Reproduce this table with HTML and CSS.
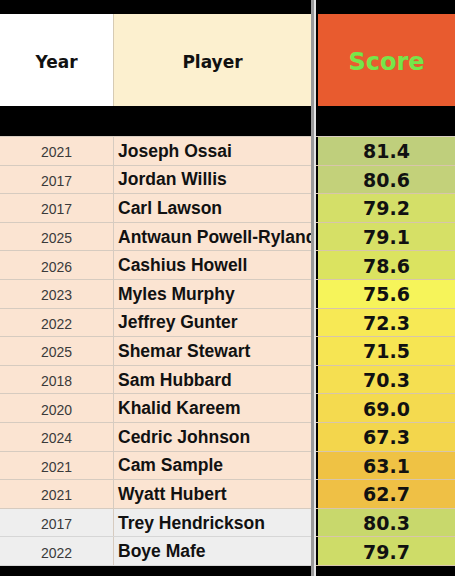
FILE: index.html
```html
<!DOCTYPE html>
<html lang="en">
<head>
    <meta charset="UTF-8">
    <meta name="viewport" content="width=device-width, initial-scale=1.0">
    <title>Edge Rusher Scores</title>
    <link rel="stylesheet" href="styles.css">
</head>
<body>
    <div class="sheet">
        <div class="panel left">
            <div class="bar top"></div>
            <div class="row head">
                <div class="cell year-head">Year</div>
                <div class="cell player-head">Player</div>
            </div>
            <div class="bar mid"></div>

            <div class="row"><div class="cell year">2021</div><div class="cell name">Joseph Ossai</div></div>
            <div class="row"><div class="cell year">2017</div><div class="cell name">Jordan Willis</div></div>
            <div class="row"><div class="cell year">2017</div><div class="cell name">Carl Lawson</div></div>
            <div class="row"><div class="cell year">2025</div><div class="cell name">Antwaun Powell-Rylander</div></div>
            <div class="row"><div class="cell year">2026</div><div class="cell name">Cashius Howell</div></div>
            <div class="row"><div class="cell year">2023</div><div class="cell name">Myles Murphy</div></div>
            <div class="row"><div class="cell year">2022</div><div class="cell name">Jeffrey Gunter</div></div>
            <div class="row"><div class="cell year">2025</div><div class="cell name">Shemar Stewart</div></div>
            <div class="row"><div class="cell year">2018</div><div class="cell name">Sam Hubbard</div></div>
            <div class="row"><div class="cell year">2020</div><div class="cell name">Khalid Kareem</div></div>
            <div class="row"><div class="cell year">2024</div><div class="cell name">Cedric Johnson</div></div>
            <div class="row"><div class="cell year">2021</div><div class="cell name">Cam Sample</div></div>
            <div class="row"><div class="cell year">2021</div><div class="cell name">Wyatt Hubert</div></div>
            <div class="row other"><div class="cell year">2017</div><div class="cell name">Trey Hendrickson</div></div>
            <div class="row other"><div class="cell year">2022</div><div class="cell name">Boye Mafe</div></div>

            <div class="bar bottom"></div>
        </div>

        <div class="divider"></div>

        <div class="panel right">
            <div class="bar top"></div>
            <div class="row head">
                <div class="cell score-head">Score</div>
            </div>
            <div class="bar mid"></div>

            <div class="row"><div class="cell score s1">81.4</div></div>
            <div class="row"><div class="cell score s2">80.6</div></div>
            <div class="row"><div class="cell score s3">79.2</div></div>
            <div class="row"><div class="cell score s4">79.1</div></div>
            <div class="row"><div class="cell score s5">78.6</div></div>
            <div class="row"><div class="cell score s6">75.6</div></div>
            <div class="row"><div class="cell score s7">72.3</div></div>
            <div class="row"><div class="cell score s8">71.5</div></div>
            <div class="row"><div class="cell score s9">70.3</div></div>
            <div class="row"><div class="cell score s10">69.0</div></div>
            <div class="row"><div class="cell score s11">67.3</div></div>
            <div class="row"><div class="cell score s12">63.1</div></div>
            <div class="row"><div class="cell score s13">62.7</div></div>
            <div class="row"><div class="cell score s14">80.3</div></div>
            <div class="row"><div class="cell score s15">79.7</div></div>

            <div class="bar bottom"></div>
        </div>
    </div>
</body>
</html>
```

FILE: styles.css
```css
* {
    margin: 0;
    padding: 0;
    box-sizing: border-box;
}

body {
    background: #000;
    width: 455px;
    height: 576px;
    overflow: hidden;
}

.sheet {
    display: flex;
    height: 576px;
}

.panel {
    display: flex;
    flex-direction: column;
}

.left {
    width: 311px;
}

.right {
    flex: 1;
    border-left: 2px solid #e4e4e4;
}

.divider {
    width: 3px;
    background: #9a9a9a;
}

.bar {
    background: #000;
}

.bar.top {
    height: 14px;
}

.bar.mid {
    height: 31px;
    border-bottom: 1px solid #d8cdc2;
}

.bar.bottom {
    flex: 1;
}

.row {
    display: flex;
    height: 28.6px;
    border-bottom: 1px solid #d6cbc0;
    background: #fbe4d2;
}

.row.other {
    background: #eeeeee;
    border-bottom-color: #d6d6d6;
}

.row.head {
    height: 92px;
    border-bottom: none;
}

.cell {
    display: flex;
    align-items: center;
}

.year-head,
.player-head,
.score-head {
    justify-content: center;
    font-family: "DejaVu Sans", Verdana, sans-serif;
    font-weight: bold;
    font-size: 17px;
    color: #111;
}

.year-head {
    width: 113px;
    background: #fff;
    padding-top: 3px;
}

.player-head {
    flex: 1;
    background: #fcf0cf;
    border-left: 1px solid #d6cbb4;
    padding-top: 3px;
}

.score-head {
    flex: 1;
    background: #e85b2f;
    color: #76e64a;
    font-size: 24px;
    border-left: 2px solid #000;
    padding-top: 4px;
}

.year {
    width: 113px;
    justify-content: center;
    padding-top: 3px;
    font-family: "Liberation Sans", Arial, sans-serif;
    font-size: 14px;
    color: #3a3a3a;
}

.name {
    flex: 1;
    padding-left: 4px;
    padding-top: 1px;
    border-left: 1px solid #d6cbc0;
    font-family: "Liberation Sans", Arial, sans-serif;
    font-weight: bold;
    font-size: 17.5px;
    color: #111;
    white-space: nowrap;
    overflow: hidden;
}

.score {
    flex: 1;
    justify-content: center;
    padding-top: 1px;
    border-left: 2px solid #000;
    font-family: "DejaVu Sans", Verdana, sans-serif;
    font-weight: bold;
    font-size: 19px;
    color: #111;
}

.right .row {
    border-bottom-color: rgba(150, 140, 100, 0.35);
}

.s1 { background: #bfcf7c; }
.s2 { background: #c3d17a; }
.s3 { background: #d4df68; }
.s4 { background: #d6e066; }
.s5 { background: #dbe360; }
.s6 { background: #f6f45a; }
.s7 { background: #f7e955; }
.s8 { background: #f6e553; }
.s9 { background: #f5df51; }
.s10 { background: #f4da4f; }
.s11 { background: #f3d64c; }
.s12 { background: #efc244; }
.s13 { background: #efc045; }
.s14 { background: #c8d86c; }
.s15 { background: #cedc68; }
```
